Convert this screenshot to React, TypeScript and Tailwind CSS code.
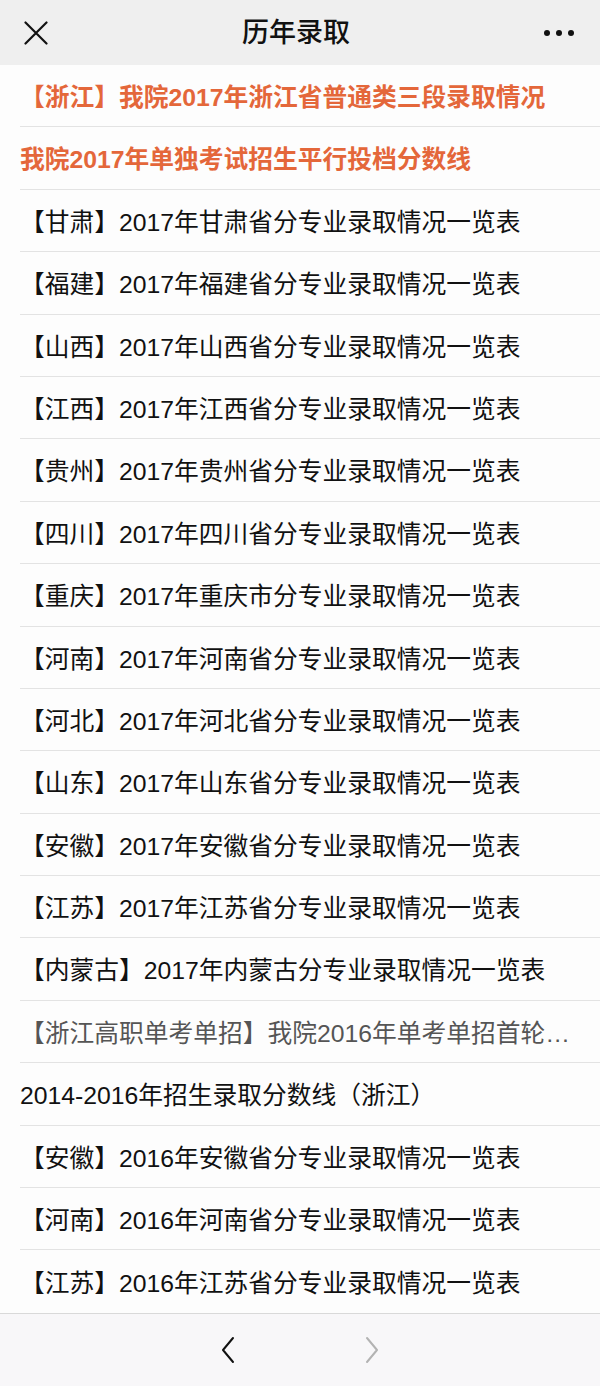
import React from 'react';

type Item = { text: string; tone?: 'orange' | 'gray' };

const items: Item[] = [
  { text: '【浙江】我院2017年浙江省普通类三段录取情况', tone: 'orange' },
  { text: '我院2017年单独考试招生平行投档分数线', tone: 'orange' },
  { text: '【甘肃】2017年甘肃省分专业录取情况一览表' },
  { text: '【福建】2017年福建省分专业录取情况一览表' },
  { text: '【山西】2017年山西省分专业录取情况一览表' },
  { text: '【江西】2017年江西省分专业录取情况一览表' },
  { text: '【贵州】2017年贵州省分专业录取情况一览表' },
  { text: '【四川】2017年四川省分专业录取情况一览表' },
  { text: '【重庆】2017年重庆市分专业录取情况一览表' },
  { text: '【河南】2017年河南省分专业录取情况一览表' },
  { text: '【河北】2017年河北省分专业录取情况一览表' },
  { text: '【山东】2017年山东省分专业录取情况一览表' },
  { text: '【安徽】2017年安徽省分专业录取情况一览表' },
  { text: '【江苏】2017年江苏省分专业录取情况一览表' },
  { text: '【内蒙古】2017年内蒙古分专业录取情况一览表' },
  { text: '【浙江高职单考单招】我院2016年单考单招首轮投档线及录取情况', tone: 'gray' },
  { text: '2014-2016年招生录取分数线（浙江）' },
  { text: '【安徽】2016年安徽省分专业录取情况一览表' },
  { text: '【河南】2016年河南省分专业录取情况一览表' },
  { text: '【江苏】2016年江苏省分专业录取情况一览表' },
];

const toneClass = {
  orange: 'text-[#e4673a] font-bold',
  gray: 'text-[#555555]',
  black: 'text-[#111111]',
};

export default function App() {
  return (
    <div
      className="w-[600px] h-[1386px] flex flex-col bg-[#fdfdfd] overflow-hidden"
      style={{ fontFamily: '"Liberation Sans", "Noto Sans CJK SC", sans-serif' }}
    >
      {/* Nav bar */}
      <header className="h-[65px] shrink-0 bg-[#efefef] flex items-center justify-between px-[24px]">
        <svg width="24" height="24" viewBox="0 0 24 24" className="text-[#111]">
          <path d="M1.5 1.5 L22.5 22.5 M22.5 1.5 L1.5 22.5" stroke="currentColor" strokeWidth="2.2" strokeLinecap="round" />
        </svg>
        <h1 className="text-[27px] leading-[1.3] pt-[3px] font-medium text-[#111]">历年录取</h1>
        <div className="flex items-center gap-[6px] pr-[2px]">
          <span className="w-[6px] h-[6px] rounded-full bg-[#111]" />
          <span className="w-[6px] h-[6px] rounded-full bg-[#111]" />
          <span className="w-[6px] h-[6px] rounded-full bg-[#111]" />
        </div>
      </header>

      {/* List */}
      <ul className="flex-1 flex flex-col">
        {items.map((item, i) => (
          <li
            key={i}
            className={`h-[62.4px] shrink-0 ml-[20px] pr-[26px] pt-[4px] flex items-center ${
              i < items.length - 1 ? 'border-b border-[#e3e3e3]' : ''
            }`}
          >
            <span
              className={`text-[24.75px] leading-[1.35] whitespace-nowrap overflow-hidden text-ellipsis ${
                toneClass[item.tone ?? 'black']
              }`}
            >
              {item.text}
            </span>
          </li>
        ))}
      </ul>

      {/* Bottom toolbar */}
      <footer className="h-[73px] shrink-0 bg-[#f8f7f9] border-t border-[#d9d9d9] flex items-center justify-center gap-[128px]">
        <svg width="16" height="28" viewBox="0 0 16 28">
          <path d="M13 2 L3 14 L13 26" fill="none" stroke="#111" strokeWidth="2" strokeLinecap="round" strokeLinejoin="round" />
        </svg>
        <svg width="16" height="28" viewBox="0 0 16 28">
          <path d="M3 2 L13 14 L3 26" fill="none" stroke="#b3b3b3" strokeWidth="2" strokeLinecap="round" strokeLinejoin="round" />
        </svg>
      </footer>
    </div>
  );
}
